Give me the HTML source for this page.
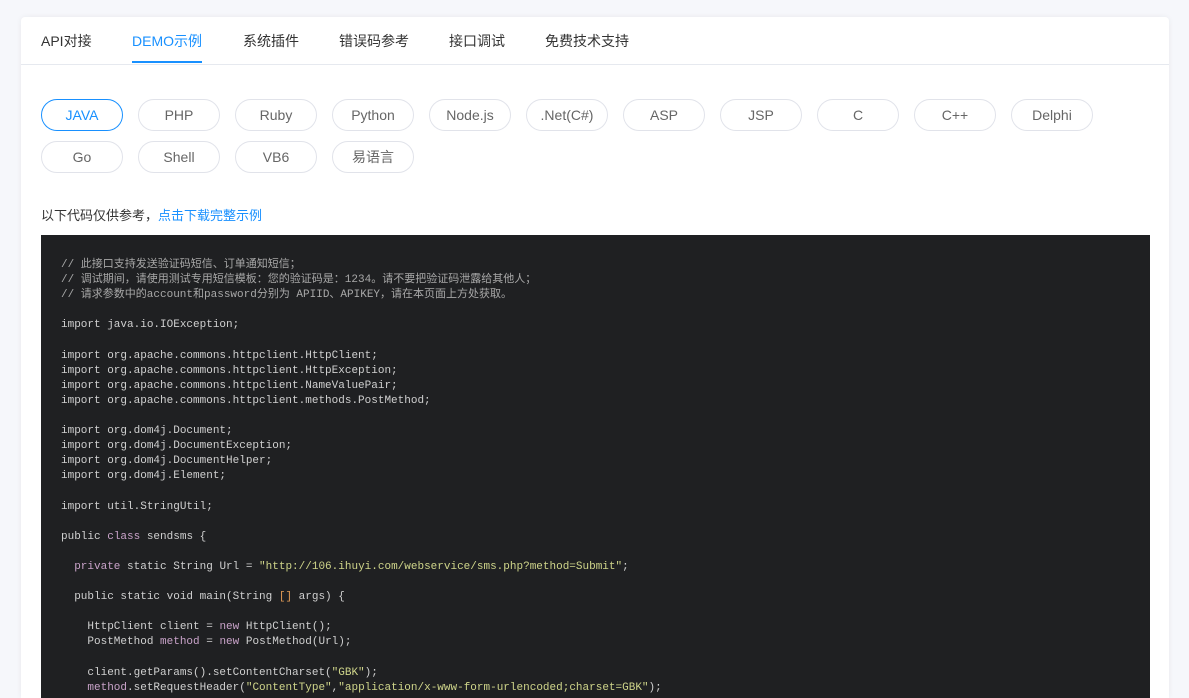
<!DOCTYPE html>
<html style="overflow:hidden"><head><meta charset="utf-8"><style>
body{margin:0;background:#f6f7fb;font-family:"Liberation Sans","Noto Sans CJK SC",sans-serif;width:1189px;height:698px;overflow:hidden;position:relative;}
.card{position:absolute;left:21px;top:17px;width:1148px;height:681px;background:#fff;border-radius:4px 4px 0 0;box-shadow:0 0 6px rgba(0,0,0,.06);overflow:hidden;}
.tabs{height:47px;border-bottom:1px solid #e6e9ef;position:relative;}
.tab{position:absolute;top:15px;font-size:14px;color:#333;line-height:18px;}
.tab.on{color:#1890ff;}
.tab.on:after{content:"";position:absolute;left:0;right:0;top:29px;height:2px;background:#1890ff;}
.btn{position:absolute;width:80px;height:30px;border:1px solid #e1e3ea;border-radius:16px;text-align:center;line-height:30px;font-size:14px;color:#666;}
.btn.on{border-color:#1890ff;color:#1890ff;}
.note{position:absolute;left:20px;top:188px;font-size:13px;color:#333;}
.note span{color:#1890ff;}
pre{position:absolute;left:20px;top:218px;width:1109px;height:480px;box-sizing:border-box;margin:0;background:#1f2022;padding:23px 0 0 20px;font-family:"Liberation Mono","Noto Sans CJK SC",monospace;font-size:11px;line-height:15.1px;color:#d0d0d0;}
.c{color:#a8a8a8}.k{color:#c9a3c9}.s{color:#cfd58a}.o{color:#e09a55}
</style></head><body>
<div class="card">
<div class="tabs">
<div class="tab" style="left:20px">API对接</div>
<div class="tab on" style="left:111px">DEMO示例</div>
<div class="tab" style="left:222px">系统插件</div>
<div class="tab" style="left:318px">错误码参考</div>
<div class="tab" style="left:428px">接口调试</div>
<div class="tab" style="left:524px">免费技术支持</div>
</div>
<div class="btn on" style="left:20px;top:82px">JAVA</div>
<div class="btn" style="left:117px;top:82px">PHP</div>
<div class="btn" style="left:214px;top:82px">Ruby</div>
<div class="btn" style="left:311px;top:82px">Python</div>
<div class="btn" style="left:408px;top:82px">Node.js</div>
<div class="btn" style="left:505px;top:82px">.Net(C#)</div>
<div class="btn" style="left:602px;top:82px">ASP</div>
<div class="btn" style="left:699px;top:82px">JSP</div>
<div class="btn" style="left:796px;top:82px">C</div>
<div class="btn" style="left:893px;top:82px">C++</div>
<div class="btn" style="left:990px;top:82px">Delphi</div>
<div class="btn" style="left:20px;top:124px">Go</div>
<div class="btn" style="left:117px;top:124px">Shell</div>
<div class="btn" style="left:214px;top:124px">VB6</div>
<div class="btn" style="left:311px;top:124px">易语言</div>
<div class="note">以下代码仅供参考，<span>点击下载完整示例</span></div>
<pre><span class="c">// 此接口支持发送验证码短信、订单通知短信；
// 调试期间，请使用测试专用短信模板：您的验证码是：1234。请不要把验证码泄露给其他人；
// 请求参数中的account和password分别为 APIID、APIKEY，请在本页面上方处获取。</span>

import java.io.IOException;

import org.apache.commons.httpclient.HttpClient;
import org.apache.commons.httpclient.HttpException;
import org.apache.commons.httpclient.NameValuePair;
import org.apache.commons.httpclient.methods.PostMethod;

import org.dom4j.Document;
import org.dom4j.DocumentException;
import org.dom4j.DocumentHelper;
import org.dom4j.Element;

import util.StringUtil;

public <span class="k">class</span> sendsms {

  <span class="k">private</span> static String Url = <span class="s">"http://106.ihuyi.com/webservice/sms.php?method=Submit"</span>;

  public static void main(String <span class="o">[]</span> args) {

    HttpClient client = <span class="k">new</span> HttpClient();
    PostMethod <span class="k">method</span> = <span class="k">new</span> PostMethod(Url);

    client.getParams().setContentCharset(<span class="s">"GBK"</span>);
    <span class="k">method</span>.setRequestHeader(<span class="s">"ContentType"</span>,<span class="s">"application/x-www-form-urlencoded;charset=GBK"</span>);
</pre>
</div>
</body></html>
